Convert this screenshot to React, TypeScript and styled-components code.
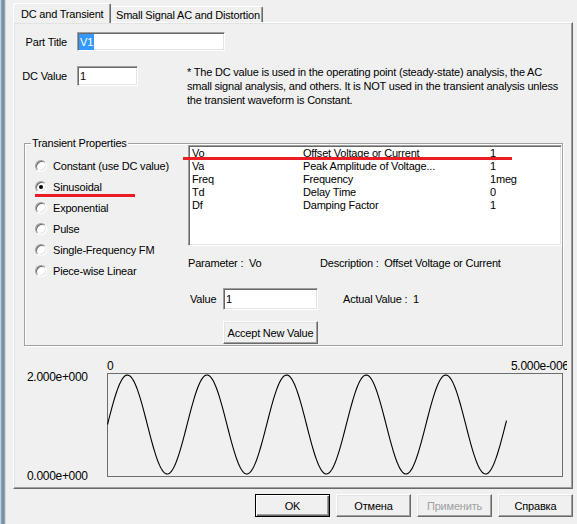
import React from 'react';
import styled, { createGlobalStyle } from 'styled-components';

const GlobalStyle = createGlobalStyle`
  html, body { margin: 0; padding: 0; background: #f0f0f0; }
  body {
    font-family: "Liberation Sans", Arial, sans-serif;
    font-size: 11px;
    letter-spacing: -0.2px;
    color: #000;
  }
  #root { width: 577px; height: 524px; overflow: hidden; }
  * { box-sizing: border-box; }
`;

const Window = styled.div`
  position: relative;
  display: flex;
  width: 577px;
  height: 524px;
  background: #f0f0f0;
  overflow: hidden;
`;

const FrameEdge = styled.div`
  flex: none;
  width: 6px;
  background: linear-gradient(
    to right,
    #c3ced9 0 1px,
    #8fa5ba 1px 2px,
    #7690a9 2px 4px,
    #8ea3b8 4px 5px,
    #d3dae1 5px 6px
  );
`;

const Dialog = styled.div`
  flex: 1;
  display: flex;
  flex-direction: column;
  padding: 0 4px 0 7px;
`;

const TabStrip = styled.div`
  display: flex;
  align-items: flex-end;
  height: 22px;
`;

const Tab = styled.div<{ $active?: boolean; $w: number }>`
  position: relative;
  z-index: ${p => (p.$active ? 1 : 0)};
  display: flex;
  align-items: center;
  width: ${p => p.$w}px;
  height: ${p => (p.$active ? 20 : 16)}px;
  margin-bottom: ${p => (p.$active ? -1 : 0)}px;
  padding-left: ${p => (p.$active ? 7 : 5)}px;
  white-space: nowrap;
  background: #f0f0f0;
  border-top: 1px solid #ffffff;
  border-left: ${p => (p.$active ? '1px solid #ffffff' : 'none')};
  border-right: 1px solid #696969;
  border-radius: 2px 2px 0 0;
  box-shadow: inset -1px 0 0 #a0a0a0;
`;

const Panel = styled.div`
  flex: none;
  width: 560px;
  height: 467px;
  display: flex;
  flex-direction: column;
  padding: 9px 0 0 0;
  border: 1px solid;
  border-color: #ffffff #696969 #696969 #ffffff;
  box-shadow: inset -1px -1px 0 #a0a0a0, inset 1px 1px 0 #e3e3e3;
`;

const FieldRow = styled.div<{ $top: number }>`
  display: flex;
  align-items: flex-start;
  margin-top: ${p => p.$top}px;
`;

const FieldLabel = styled.div<{ $h: number }>`
  width: 53px;
  height: ${p => p.$h}px;
  margin-right: 10px;
  display: flex;
  align-items: center;
  justify-content: flex-end;
  white-space: nowrap;
`;

const TextBox = styled.div<{ $w: number; $h: number }>`
  flex: none;
  width: ${p => p.$w}px;
  height: ${p => p.$h}px;
  background: #ffffff;
  border: 1px solid;
  border-color: #a0a0a0 #ffffff #ffffff #a0a0a0;
  box-shadow: inset 1px 1px 0 #696969, inset -1px -1px 0 #e3e3e3;
  padding-left: 2px;
  display: flex;
  align-items: center;
  white-space: nowrap;
`;

const Selected = styled.span`
  margin-left: -1px;
  padding: 0 1px;
  height: 16px;
  line-height: 16px;
  background: #3399ff;
  color: #ffffff;
`;

const Note = styled.div`
  margin: -1px 0 0 49px;
  line-height: 14px;
  white-space: nowrap;
`;

const GroupBox = styled.div`
  position: relative;
  flex: none;
  width: 539px;
  height: 203px;
  margin: 36px 0 0 10px;
  padding: 1px 0 0 10px;
  border: 1px solid #a0a0a0;
  box-shadow: inset 1px 1px 0 #ffffff, 1px 1px 0 #ffffff;
  display: grid;
  grid-template-columns: 153px 374px;
`;

const GroupTitle = styled.span`
  position: absolute;
  top: -7px;
  left: 6px;
  padding: 0 1px;
  line-height: 13px;
  background: #f0f0f0;
  white-space: nowrap;
`;

const RadioList = styled.div`
  display: flex;
  flex-direction: column;
  padding-top: 10px;
`;

const RadioRow = styled.div`
  display: flex;
  align-items: center;
  gap: 6px;
  height: 21px;
  white-space: nowrap;
`;

const RadioCircle = styled.span<{ $checked?: boolean }>`
  flex: none;
  width: 12px;
  height: 12px;
  border-radius: 50%;
  background: #ffffff;
  border: 1px solid;
  border-color: #a0a0a0 #ffffff #ffffff #a0a0a0;
  box-shadow: inset 1px 1px 0 #696969, inset -1px -1px 0 #e3e3e3;
  display: flex;
  align-items: center;
  justify-content: center;
  &::after {
    content: '';
    width: 4px;
    height: 4px;
    border-radius: 50%;
    background: ${p => (p.$checked ? '#000000' : 'transparent')};
  }
`;

const ParamColumn = styled.div`
  display: flex;
  flex-direction: column;
`;

const ListBox = styled.div`
  height: 101px;
  background: #ffffff;
  border: 1px solid;
  border-color: #a0a0a0 #ffffff #ffffff #a0a0a0;
  box-shadow: inset 1px 1px 0 #696969, inset -1px -1px 0 #e3e3e3;
  padding: 1px 0 0 3px;
`;

const ListRow = styled.div`
  display: grid;
  grid-template-columns: 111px 187px auto;
  height: 13px;
  line-height: 13px;
  white-space: nowrap;
`;

const InfoRow = styled.div`
  display: grid;
  grid-template-columns: 132px auto;
  margin-top: 11px;
  line-height: 13px;
  white-space: pre;
`;

const ValueRow = styled.div`
  display: grid;
  grid-template-columns: 33px 95px auto;
  align-items: center;
  margin-top: 18px;
  padding-left: 2px;
  white-space: pre;
`;

const ActualValue = styled.span`
  margin-left: 25px;
`;

const Button = styled.div<{ $w: number; $disabled?: boolean; $default?: boolean }>`
  flex: none;
  width: ${p => p.$w}px;
  height: 23px;
  display: flex;
  align-items: center;
  justify-content: center;
  white-space: nowrap;
  background: #f0f0f0;
  color: ${p => (p.$disabled ? '#a0a0a0' : '#000000')};
  border: 1px solid;
  border-color: ${p => (p.$default ? '#000000' : '#ffffff #696969 #696969 #ffffff')};
  box-shadow: ${p =>
    p.$default
      ? 'inset 1px 1px 0 #ffffff, inset -1px -1px 0 #696969, inset -2px -2px 0 #a0a0a0'
      : 'inset -1px -1px 0 #a0a0a0, inset 1px 1px 0 #e3e3e3'};
`;

const AcceptButton = styled(Button)`
  margin: 11px 0 0 35px;
`;

const Graph = styled.div`
  display: grid;
  grid-template-columns: 93px 456px;
  grid-template-rows: 14px 104px;
  margin-top: 13px;
  font-size: 12px;
  letter-spacing: -0.3px;
`;

const TopAxis = styled.div`
  grid-column: 2;
  display: flex;
  justify-content: space-between;
  margin-right: -4px;
  line-height: 14px;
  white-space: nowrap;
`;

const ClippedLabel = styled.span`
  width: 56px;
  overflow: hidden;
`;

const YAxis = styled.div`
  grid-column: 1;
  grid-row: 2;
  display: flex;
  flex-direction: column;
  justify-content: space-between;
  padding-left: 13px;
  margin: -3px 0 -6px 0;
  line-height: 14px;
  white-space: nowrap;
`;

const Plot = styled.svg`
  grid-column: 2;
  grid-row: 2;
  display: block;
`;

const ButtonRow = styled.div`
  display: flex;
  justify-content: flex-end;
  gap: 6px;
  margin-top: 5px;
`;

const RedMark = styled.div<{ $x: number; $y: number; $w: number }>`
  position: absolute;
  left: ${p => p.$x}px;
  top: ${p => p.$y}px;
  width: ${p => p.$w}px;
  height: 3px;
  background: #ec1c24;
`;

const params = [
  { name: 'Vo', desc: 'Offset Voltage or Current', value: '1' },
  { name: 'Va', desc: 'Peak Amplitude of Voltage...', value: '1' },
  { name: 'Freq', desc: 'Frequency', value: '1meg' },
  { name: 'Td', desc: 'Delay Time', value: '0' },
  { name: 'Df', desc: 'Damping Factor', value: '1' },
];

const waveforms = [
  { label: 'Constant (use DC value)', checked: false },
  { label: 'Sinusoidal', checked: true },
  { label: 'Exponential', checked: false },
  { label: 'Pulse', checked: false },
  { label: 'Single-Frequency FM', checked: false },
  { label: 'Piece-wise Linear', checked: false },
];

const wavePoints = Array.from({ length: 400 }, (_, i) => {
  const y = 51.5 - 49.5 * Math.sin((2 * Math.PI * i) / 79.6);
  return `${i + 0.5},${y.toFixed(2)}`;
}).join(' ');

export default function App() {
  return (
    <>
      <GlobalStyle />
      <Window>
        <FrameEdge />
        <Dialog>
          <TabStrip>
            <Tab $active $w={98}>DC and Transient</Tab>
            <Tab $w={152}>Small Signal AC and Distortion</Tab>
          </TabStrip>
          <Panel>
            <FieldRow $top={0}>
              <FieldLabel $h={19}>Part Title</FieldLabel>
              <TextBox $w={148} $h={19}>
                <Selected>V1</Selected>
              </TextBox>
            </FieldRow>
            <FieldRow $top={15}>
              <FieldLabel $h={20}>DC Value</FieldLabel>
              <TextBox $w={61} $h={20}>1</TextBox>
              <Note>
                * The DC value is used in the operating point (steady-state) analysis, the AC
                <br />
                small signal analysis, and others. It is NOT used in the transient analysis unless
                <br />
                the transient waveform is Constant.
              </Note>
            </FieldRow>
            <GroupBox>
              <GroupTitle>Transient Properties</GroupTitle>
              <RadioList>
                {waveforms.map(w => (
                  <RadioRow key={w.label}>
                    <RadioCircle $checked={w.checked} />
                    {w.label}
                  </RadioRow>
                ))}
              </RadioList>
              <ParamColumn>
                <ListBox>
                  {params.map(p => (
                    <ListRow key={p.name}>
                      <span>{p.name}</span>
                      <span>{p.desc}</span>
                      <span>{p.value}</span>
                    </ListRow>
                  ))}
                </ListBox>
                <InfoRow>
                  <span>{'Parameter :  Vo'}</span>
                  <span>{'Description :  Offset Voltage or Current'}</span>
                </InfoRow>
                <ValueRow>
                  <span>Value</span>
                  <TextBox $w={95} $h={22}>1</TextBox>
                  <ActualValue>{'Actual Value :  1'}</ActualValue>
                </ValueRow>
                <AcceptButton $w={95}>Accept New Value</AcceptButton>
              </ParamColumn>
            </GroupBox>
            <Graph>
              <TopAxis>
                <span>0</span>
                <ClippedLabel>5.000e-006</ClippedLabel>
              </TopAxis>
              <YAxis>
                <span>2.000e+000</span>
                <span>0.000e+000</span>
              </YAxis>
              <Plot width={456} height={104} viewBox="0 0 456 104">
                <rect x={0.5} y={0.5} width={455} height={103} fill="none" stroke="#6d6d6d" strokeWidth={1} />
                <polyline points={wavePoints} fill="none" stroke="#000000" strokeWidth={1.1} />
              </Plot>
            </Graph>
          </Panel>
          <ButtonRow>
            <Button $w={75} $default>OK</Button>
            <Button $w={75}>Отмена</Button>
            <Button $w={75} $disabled>Применить</Button>
            <Button $w={75}>Справка</Button>
          </ButtonRow>
        </Dialog>
        <RedMark $x={183} $y={157} $w={329} />
        <RedMark $x={35} $y={194} $w={100} />
      </Window>
    </>
  );
}
